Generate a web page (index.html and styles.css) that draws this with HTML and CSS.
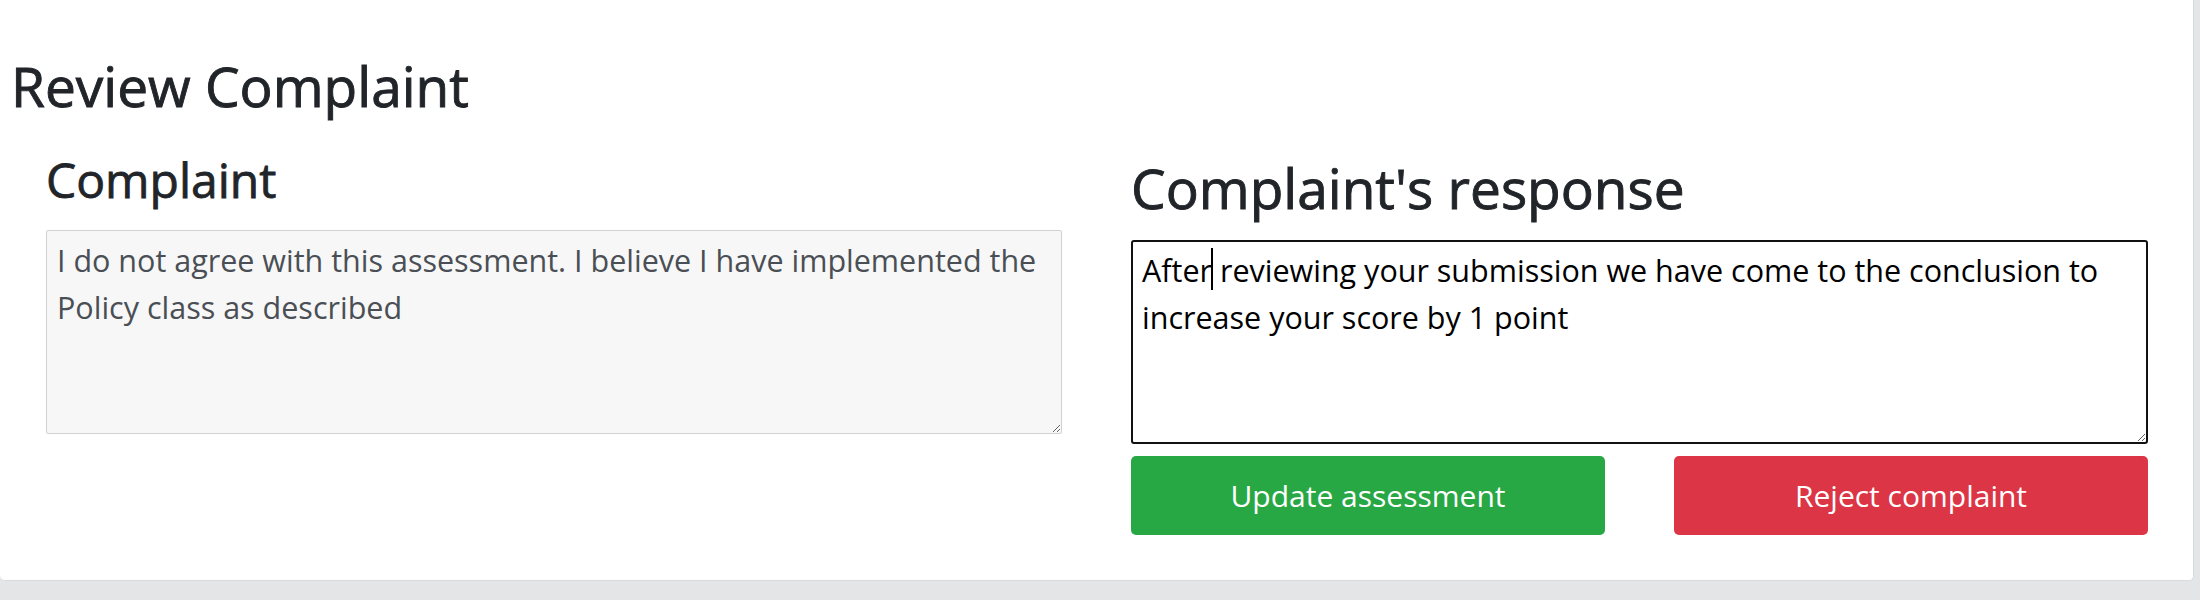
FILE: index.html
```html
<!DOCTYPE html>
<html lang="en">
<head>
<meta charset="utf-8">
<title>Review Complaint</title>
<link rel="stylesheet" href="styles.css">
</head>
<body>
<main class="card">
  <h1 class="page-title">Review Complaint</h1>
  <div class="row">
    <section class="col">
      <h3 class="col-title-sm">Complaint</h3>
      <textarea class="field field-readonly" readonly>I do not agree with this assessment. I believe I have implemented the Policy class as described</textarea>
    </section>
    <section class="col">
      <h2 class="col-title-lg">Complaint's response</h2>
      <div class="field-wrap">
        <textarea id="response" class="field field-active">After reviewing your submission we have come to the conclusion to increase your score by 1 point</textarea>
        <span class="caret" aria-hidden="true"></span>
      </div>
      <div class="actions">
        <button class="btn btn-success" type="button">Update assessment</button>
        <button class="btn btn-danger" type="button">Reject complaint</button>
      </div>
    </section>
  </div>
</main>
</body>
</html>
```
FILE: styles.css
```css
html, body {
  margin: 0;
  padding: 0;
}
body {
  background: #e4e5e7;
  font-family: "Open Sans", "Noto Sans", sans-serif;
  color: #212529;
  width: 2200px;
  height: 600px;
  overflow: hidden;
}
.card {
  box-sizing: border-box;
  width: 2194px;
  height: 581px;
  background: #fff;
  border-right: 1px solid #d9dadc;
  border-bottom: 1px solid #d9dadc;
  border-radius: 0 0 5px 5px;
  padding: 53px 45px 0 11px;
}
.page-title {
  margin: 0;
  font-size: 55px;
  line-height: 66px;
  font-weight: 400;
  -webkit-text-stroke: 0.9px #212529;
  color: #212529;
}
.row {
  display: grid;
  grid-template-columns: 1016px 1017px;
  column-gap: 69px;
  margin: 31px 0 0 35px;
  align-items: start;
}
.col {
  display: flex;
  flex-direction: column;
}
.col-title-sm {
  margin: 1px 0 21px;
  font-size: 48px;
  line-height: 58px;
  font-weight: 400;
  -webkit-text-stroke: 0.8px #212529;
}
.col-title-lg {
  margin: 5px 0 19px;
  font-size: 55px;
  line-height: 66px;
  font-weight: 400;
  -webkit-text-stroke: 0.9px #212529;
}
.field-wrap {
  position: relative;
}
.field {
  box-sizing: border-box;
  width: 100%;
  height: 204px;
  margin: 0;
  font-family: "Open Sans", "Noto Sans", sans-serif;
  font-size: 30.5px;
  line-height: 47px;
  outline: none;
  resize: vertical;
  display: block;
}
.field-readonly {
  background: #f7f7f7;
  color: #4a4f55;
  border: 1px solid #cfd1d3;
  border-radius: 2px;
  padding: 6px 10px;
}
.field-active {
  background: #fff;
  color: #000;
  border: 2px solid #111;
  border-radius: 3px;
  padding: 5px 9px;
}
.caret {
  position: absolute;
  left: 80px;
  top: 8px;
  width: 2px;
  height: 42px;
  background: #000;
}
.actions {
  display: grid;
  grid-template-columns: 1fr 1fr;
  column-gap: 69px;
  margin-top: 12px;
}
.btn {
  font-family: "Open Sans", "Noto Sans", sans-serif;
  font-size: 30px;
  line-height: 47px;
  padding: 16px 10px;
  border: 0;
  border-radius: 5px;
  color: #fff;
  text-align: center;
  cursor: pointer;
}
.btn-success {
  background: #28a745;
}
.btn-danger {
  background: #dc3545;
}
```
